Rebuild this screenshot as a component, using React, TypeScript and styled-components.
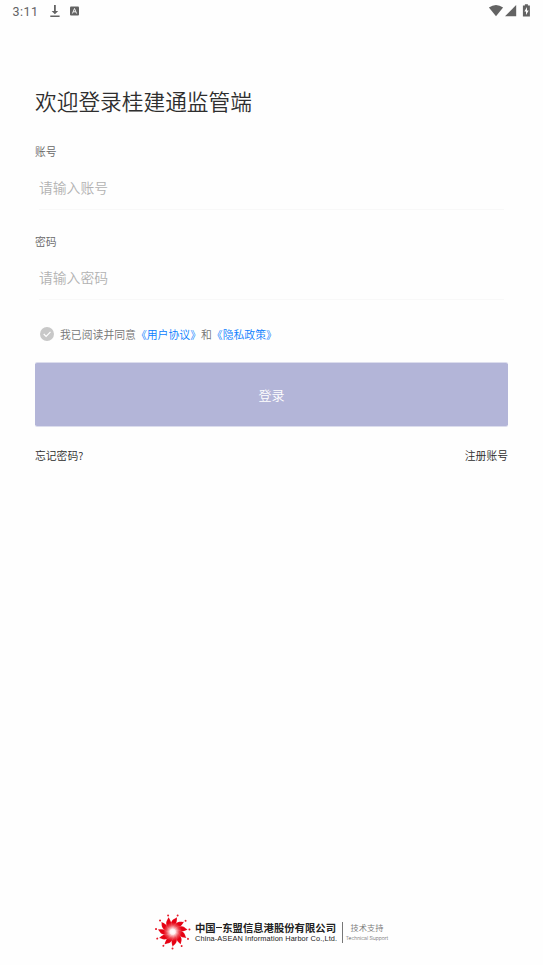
import React from "react";
import styled, { createGlobalStyle } from "styled-components";

const GlobalStyle = createGlobalStyle`
  * { box-sizing: border-box; }
  html, body { margin: 0; background: #fefefe; }
  body { font-family: "Noto Sans CJK SC", "Noto Sans", sans-serif; font-weight: 350; }
  button, input { font-family: inherit; font-weight: inherit; }
`;

const Screen = styled.div`
  display: flex;
  flex-direction: column;
  height: 965px;
  width: 543px;
  overflow: hidden;
`;

const StatusBar = styled.header`
  display: flex;
  align-items: center;
  height: 22px;
  padding: 0 12px;
  color: #636363;
`;

const Clock = styled.span`
  width: 38px;
  font: 400 12.5px/22px Roboto, sans-serif;
  letter-spacing: 0.45px;
  padding: 1px 0 0 0.5px;
`;

const StatusIcons = styled.div<{ $end?: boolean }>`
  display: flex;
  margin-left: ${(p) => (p.$end ? "auto" : "0")};
`;

const Main = styled.main`
  display: flex;
  flex-direction: column;
  padding: 63px 35px 0;
`;

const Title = styled.h1`
  margin: 0;
  height: 32px;
  font-size: 21.7px;
  line-height: 32px;
  font-weight: inherit;
  color: #2e2e2e;
`;

const Field = styled.label`
  display: flex;
  flex-direction: column;
  height: 90px;
`;

const Fields = styled.div`
  padding-top: 26px;
`;

const FieldLabel = styled.span`
  height: 16px;
  font-size: 10.8px;
  line-height: 16px;
  color: #666;
`;

const FieldInput = styled.input`
  height: 51px;
  margin: 0 4px;
  padding: 5px 0 0;
  border: 0;
  border-bottom: 1px solid #f8f8f8;
  outline: 0;
  background: transparent;
  font-size: 13.8px;
  &::placeholder { color: #b2b2b2; opacity: 1; }
`;

const Agreement = styled.div`
  display: flex;
  align-items: center;
  height: 16px;
  margin-top: 3px;
  padding-left: 5px;
  font-size: 10.85px;
  line-height: 16px;
  color: #747474;
  white-space: nowrap;
  svg { margin-right: 6px; }
`;

const DocLink = styled.a`
  color: #087cff;
`;

const LoginButton = styled.button`
  height: 65px;
  margin-top: 20px;
  border: solid #dcdded;
  border-width: 1px 0;
  border-radius: 2px;
  background: #b3b5d8;
  background-clip: padding-box;
  color: #fff;
  font-size: 13px;
  padding: 0;
`;

const Links = styled.nav`
  display: flex;
  justify-content: space-between;
  margin-top: 20px;
  font-size: 10.8px;
  line-height: 16px;
  color: #2c2c2c;
`;

const Footer = styled.footer`
  display: flex;
  align-items: center;
  height: 38px;
  margin: auto 0 14px 154px;
`;

const Company = styled.div`
  display: flex;
  flex-direction: column;
  width: 148px;
  margin-left: 3px;
  padding-right: 5px;
  border-right: 1px solid #777;
  height: 21px;
  color: #222;
  white-space: nowrap;
`;

const CompanyName = styled.span`
  display: flex;
  align-items: center;
  font-size: 10.35px;
  line-height: 11px;
  font-weight: 700;
`;

const Dash = styled.i`
  flex: none;
  width: 5.5px;
  height: 1px;
  margin: 0 0.5px;
  background: #222;
`;

const CompanyEnglish = styled.span`
  font: 400 7.35px/10px "Liberation Sans", Arial, sans-serif;
  letter-spacing: 0.12px;
  padding-top: 1px;
`;

const Support = styled.div`
  display: flex;
  flex-direction: column;
  align-items: center;
  width: 43px;
  margin-left: 2.5px;
  height: 21px;
  white-space: nowrap;
  color: #777;
  font-size: 8.2px;
  line-height: 10px;
`;

const SupportEnglish = styled.span`
  font: 300 5.4px/10px Roboto, sans-serif;
  padding-top: 1px;
  color: #555;
`;

const petalAngles = Array.from({ length: 11 }, (_, i) => (i * 360) / 11 + 17);

function Logo() {
  return (
    <svg width="38" height="38" viewBox="-18.7 -18.7 38 38">
      <defs>
        <radialGradient id="glow" gradientUnits="userSpaceOnUse" cx="0" cy="0" r="13">
          <stop offset="0" stopColor="#fff" />
          <stop offset=".2" stopColor="#ffe2e2" />
          <stop offset=".5" stopColor="#ed4650" />
          <stop offset=".72" stopColor="#e60012" />
        </radialGradient>
      </defs>
      {petalAngles.map((a) => (
        <g key={a} transform={`rotate(${a})`}>
          <path
            d="M0 0C-3.8-3-5.2-7-3.7-10.8C-2.8-12.6-1.2-13.4-.2-15C1-12 1.8-7.5 0 0Z"
            fill="url(#glow)"
            stroke="#fff"
            strokeOpacity=".4"
            strokeWidth=".25"
          />
          <circle cy="-16.9" r="1" fill="#e81c2a" />
        </g>
      ))}
      <circle r="3" fill="#fff" opacity=".5" />
    </svg>
  );
}

export default function App() {
  return (
    <>
      <GlobalStyle />
      <Screen>
        <StatusBar>
          <Clock>3:11</Clock>
          <StatusIcons>
            <svg width="30" height="22" fill="#636363">
              <path d="M4 5h1.8v6h2.4l-3.3 3.3L1.6 11H4zM.3 15.6h9.3v1.4H.3z" />
              <rect x="20" y="6.5" width="9" height="9" rx="1" />
              <path d="m22.4 13.5 2.1-5 2.1 5M23.2 11.8h2.6" fill="none" stroke="#fff" strokeWidth=".9" />
            </svg>
          </StatusIcons>
          <StatusIcons $end>
            <svg width="43" height="22" fill="#636363">
              <path d="M.9 7.6Q8 2.5 15.1 7.6L8 16.2z" />
              <path d="M28.2 5v11.2H17z" />
              <path d="M36.9 4.2h3v1.2h2v11h-7v-11h2z" />
              <path d="m39 7-2.6 4.4h1.6V15l2.7-4.5h-1.7z" fill="#fff" />
            </svg>
          </StatusIcons>
        </StatusBar>
        <Main>
          <Title>欢迎登录桂建通监管端</Title>
          <Fields>
            <Field>
              <FieldLabel>账号</FieldLabel>
              <FieldInput placeholder="请输入账号" />
            </Field>
            <Field>
              <FieldLabel>密码</FieldLabel>
              <FieldInput type="password" placeholder="请输入密码" />
            </Field>
          </Fields>
          <Agreement>
            <svg width="14" height="14" viewBox="0 0 14 14">
              <circle cx="7" cy="7" r="7" fill="#c8c8c8" />
              <path d="m3.7 7 2.4 2.4 4.4-4.5" fill="none" stroke="#fff" strokeWidth="1.2" />
            </svg>
            <span>我已阅读并同意</span>
            <DocLink>《用户协议》</DocLink>
            <span>和</span>
            <DocLink>《隐私政策》</DocLink>
          </Agreement>
          <LoginButton>登录</LoginButton>
          <Links>
            <span>忘记密码?</span>
            <span>注册账号</span>
          </Links>
        </Main>
        <Footer>
          <Logo />
          <Company>
            <CompanyName>
              中国<Dash />东盟信息港股份有限公司
            </CompanyName>
            <CompanyEnglish>China-ASEAN Information Harbor Co.,Ltd.</CompanyEnglish>
          </Company>
          <Support>
            技术支持
            <SupportEnglish>Technical Support</SupportEnglish>
          </Support>
        </Footer>
      </Screen>
    </>
  );
}
